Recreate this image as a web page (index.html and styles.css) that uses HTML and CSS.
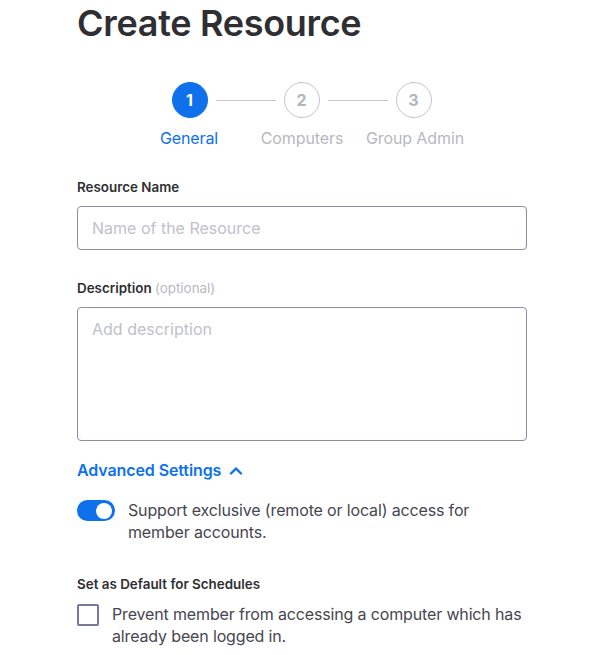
FILE: index.html
```html
<!DOCTYPE html>
<html lang="en">
  <head>
    <meta charset="UTF-8" />
    <meta name="viewport" content="width=device-width, initial-scale=1.0" />
    <title>Create Resource</title>
    <link rel="stylesheet" href="styles.css">
  </head>
  <body>
    <div class="page">
      <h1 class="title">Create Resource</h1>

      <!-- stepper -->
      <div class="stepper">
        <div class="circles">
          <div class="circle active">1</div>
          <div class="line"></div>
          <div class="circle">2</div>
          <div class="line"></div>
          <div class="circle">3</div>
        </div>
        <div class="labels">
          <span class="active">General</span>
          <span>Computers</span>
          <span>Group Admin</span>
        </div>
      </div>

      <!-- form -->
      <label class="field-label">Resource Name</label>
      <input type="text" class="text-input" placeholder="Name of the Resource" />

      <label class="field-label desc-label">Description <span class="optional">(optional)</span></label>
      <textarea class="text-area" placeholder="Add description"></textarea>

      <div class="advanced">
        Advanced Settings
        <svg width="14" height="9" viewBox="0 0 14 9">
          <path d="M2 7.5 L7 2.5 L12 7.5" fill="none" stroke="#0e71eb" stroke-width="2.4" stroke-linecap="round" stroke-linejoin="round" />
        </svg>
      </div>

      <div class="option-row toggle-row">
        <div class="toggle"><div class="knob"></div></div>
        <p>Support exclusive (remote or local) access for member accounts.</p>
      </div>

      <label class="field-label default-label">Set as Default for Schedules</label>
      <div class="option-row check-row">
        <div class="checkbox"></div>
        <p>Prevent member from accessing a computer which has already been logged in.</p>
      </div>
    </div>
  </body>
</html>
```

FILE: styles.css
```css
body {
  margin: 0;
  font-family: Inter, "Noto Sans", sans-serif;
  background: #fff;
}

.page {
  width: 450px;
  padding-left: 77px;
}

.title {
  margin: 0;
  font-size: 36px;
  line-height: 46px;
  font-weight: 600;
  letter-spacing: -0.3px;
  color: #2f2f33;
}

.stepper {
  margin-top: 36px;
}

.circles {
  display: flex;
  align-items: center;
  justify-content: center;
  padding-right: 1px;
}

.circle {
  width: 34px;
  height: 34px;
  border-radius: 50%;
  border: 1px solid #c4c4cc;
  color: #b5b5bd;
  font-size: 16px;
  font-weight: 700;
  display: flex;
  align-items: center;
  justify-content: center;
}

.circle.active {
  background: #0e71eb;
  border-color: #0e71eb;
  color: #fff;
}

.line {
  width: 60px;
  height: 1px;
  background: #c4c4cc;
  margin: 0 8px;
}

.labels {
  display: grid;
  grid-template-columns: repeat(3, 113px);
  justify-content: center;
  margin-top: 10px;
  font-size: 16px;
  line-height: 20px;
  letter-spacing: -0.1px;
  color: #b8b8c0;
  text-align: center;
}

.labels .active {
  color: #0e71eb;
}

.field-label {
  display: block;
  margin-top: 30px;
  font-size: 13.4px;
  line-height: 18px;
  font-weight: 600;
  color: #2f2f33;
}

.optional {
  font-weight: 400;
  color: #b8b8c0;
}

.text-input,
.text-area {
  display: block;
  box-sizing: border-box;
  width: 450px;
  margin-top: 10px;
  border: 1px solid #8a8ca8;
  border-radius: 4px;
  padding: 0 14px;
  font-family: Inter, "Noto Sans", sans-serif;
  font-size: 16px;
  color: #2f2f33;
  outline: none;
}

.text-input {
  height: 44px;
}

.text-area {
  height: 134px;
  padding-top: 10px;
  resize: none;
  line-height: 22px;
}

.text-input::placeholder,
.text-area::placeholder {
  color: #c1c1c9;
}

.desc-label {
  margin-top: 29px;
}

.advanced {
  margin-top: 17px;
  display: flex;
  align-items: center;
  gap: 8px;
  font-size: 16px;
  line-height: 24px;
  font-weight: 600;
  letter-spacing: -0.1px;
  color: #0e71eb;
}

.option-row {
  display: flex;
  align-items: flex-start;
}

.option-row p {
  margin: 0;
  font-size: 16px;
  line-height: 22px;
  letter-spacing: -0.15px;
  color: #46464f;
}

.toggle-row {
  margin-top: 17px;
  gap: 13px;
  padding-right: 40px;
}

.toggle {
  flex: none;
  width: 38px;
  height: 21px;
  margin-top: 1px;
  border-radius: 11px;
  background: #0e71eb;
  display: flex;
  align-items: center;
  justify-content: flex-end;
  padding-right: 3px;
  box-sizing: border-box;
}

.knob {
  width: 16px;
  height: 16px;
  border-radius: 50%;
  background: #fff;
}

.default-label {
  margin-top: 32px;
}

.check-row {
  margin-top: 10px;
  gap: 13px;
}

.checkbox {
  flex: none;
  width: 22px;
  height: 22px;
  margin-top: 1px;
  box-sizing: border-box;
  border: 2px solid #747a99;
  border-radius: 2px;
}
```
